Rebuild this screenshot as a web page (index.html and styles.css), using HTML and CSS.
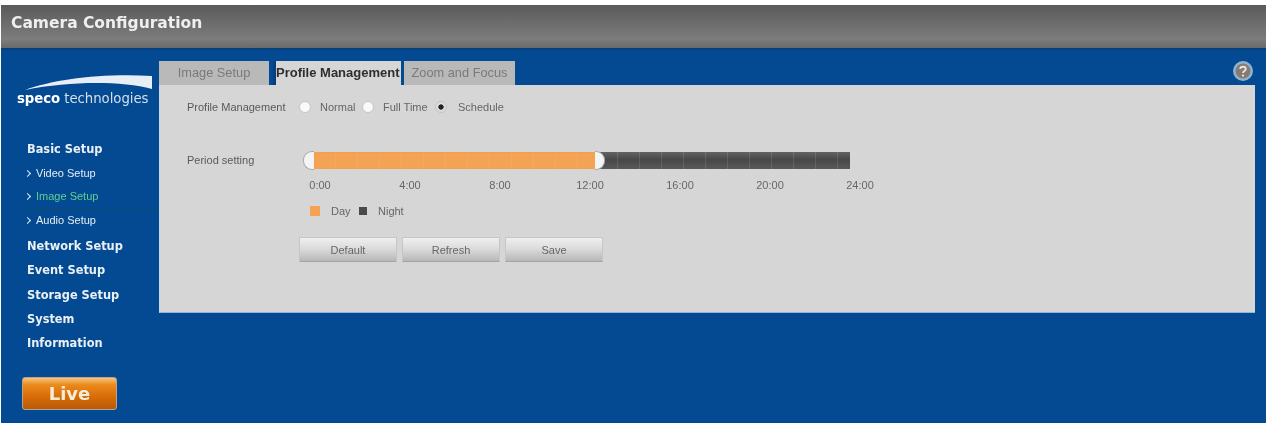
FILE: index.html
```html
<!DOCTYPE html>
<html lang="en">
<head>
<meta charset="utf-8">
<title>Camera Configuration</title>
<link rel="stylesheet" href="styles.css">
</head>
<body>
<div class="app">
  <header class="header">Camera Configuration</header>
  <div class="body">
    <aside class="sidebar">
      <div class="logo">
        <svg class="swoosh" viewBox="0 0 136 20" width="136" height="20"><path d="M9 16C38 5 88 -1 136 2V15C105 7 55 7 9 16Z" fill="#e8eef5"/></svg>
        <div class="logo-text"><b>speco</b> technologies</div>
      </div>
      <nav class="nav">
        <a class="nav-main">Basic Setup</a>
        <a class="nav-sub"><i class="chev"></i>Video Setup</a>
        <a class="nav-sub nav-current"><i class="chev"></i>Image Setup</a>
        <a class="nav-sub nav-last"><i class="chev"></i>Audio Setup</a>
        <a class="nav-main">Network Setup</a>
        <a class="nav-main">Event Setup</a>
        <a class="nav-main">Storage Setup</a>
        <a class="nav-main">System</a>
        <a class="nav-main">Information</a>
      </nav>
      <button class="live">Live</button>
    </aside>
    <main class="main">
      <div class="tabs">
        <div class="tab tab-first">Image Setup</div>
        <div class="tab tab-active">Profile Management</div>
        <div class="tab tab-last">Zoom and Focus</div>
        <svg class="help" viewBox="0 0 22 22" width="22" height="22">
          <circle cx="11" cy="11" r="10" fill="#8fb3cf"/>
          <circle cx="11" cy="11" r="7.5" fill="#857a74"/>
          <path d="M8.2 9C8.2 6 13.8 6 13.8 9C13.8 11 11 11 11 13" fill="none" stroke="#ece4dc" stroke-width="1.8"/>
          <circle cx="11" cy="15.6" r="1.1" fill="#ece4dc"/>
        </svg>
      </div>
      <section class="panel">
        <div class="row-profile">
          <span class="label">Profile Management</span>
          <i class="radio"></i><span class="opt opt-normal">Normal</span>
          <i class="radio"></i><span class="opt opt-full">Full Time</span>
          <i class="radio radio-on"></i><span class="opt">Schedule</span>
        </div>
        <div class="row-period">
          <span class="label period-label">Period setting</span>
          <div class="period">
            <div class="timeline">
              <i class="handle handle-start"></i>
              <div class="bar-day"></div>
              <i class="handle handle-mid"></i>
              <div class="bar-night"></div>
            </div>
            <div class="ticks">
              <span>0:00</span><span>4:00</span><span>8:00</span><span>12:00</span><span>16:00</span><span>20:00</span><span>24:00</span>
            </div>
            <div class="legend">
              <i class="swatch swatch-day"></i><span class="legend-day">Day</span>
              <i class="swatch swatch-night"></i><span>Night</span>
            </div>
          </div>
        </div>
        <div class="buttons">
          <button class="btn">Default</button>
          <button class="btn">Refresh</button>
          <button class="btn">Save</button>
        </div>
      </section>
    </main>
  </div>
</div>
</body>
</html>
```
FILE: styles.css
```css
* { box-sizing: border-box; }
html, body { margin: 0; height: 100%; background: #fff; overflow: hidden; }
body { font-family: "Liberation Sans", Arial, sans-serif; }
.app {
  width: 1268px; height: 423px; padding: 5px 2px 0 1px;
  display: flex; flex-direction: column; filter: blur(0.6px);
}
.header {
  height: 43px; padding: 8px 0 0 10px; flex: none;
  background: linear-gradient(#5a5a5a, #6e6e6e 45%, #7c7c7c 80%, #686a6c);
  color: #eef0f0; font: bold 15.5px/20px "DejaVu Sans", sans-serif;
}
.body { flex: 1; display: flex; background: #034a92; border-top: 2px solid #04407d; }
.sidebar { width: 158px; flex: none; display: flex; flex-direction: column; }
.logo { height: 73px; padding: 24px 0 0 15px; }
.swoosh { display: block; }
.logo-text { margin: -3px 0 0 1px; color: #d4dfea; font: 13.3px/16px "DejaVu Sans", sans-serif; white-space: nowrap; letter-spacing: -0.06px; }
.logo-text b { color: #fff; }
.nav { padding: 14px 0 0 26px; display: flex; flex-direction: column; }
.nav-main { height: 24.2px; color: #eaf0f5; font: bold 11.4px/24px "DejaVu Sans", sans-serif; white-space: nowrap; }
.nav-sub { height: 23.7px; color: #e6edf3; font: 11px/23px "Liberation Sans", sans-serif; white-space: nowrap; position: relative; left: -2px; display: flex; align-items: center; gap: 6px; }
.nav-current { color: #5fd08f; border-bottom: 1px solid #0a4a6e; }
.nav-last { margin-bottom: 2px; }
.chev { width: 5px; height: 5px; border: solid #e6edf3; border-width: 1px 1px 0 0; transform: rotate(45deg); flex: none; }
.live {
  width: 95px; height: 33px; margin: 22px 0 0 21px; padding: 0; border: 1px solid #b9a48e; border-radius: 3px;
  background: linear-gradient(#f6c47c, #ea8a1c 22%, #d86c08 60%, #b85a08);
  color: #f7ecd8; font: bold 18px/30px "DejaVu Sans", sans-serif;
}
.main { flex: 1; padding-top: 11px; }
.tabs { height: 24px; display: flex; position: relative; }
.tab { height: 24px; color: #7a7a7a; font-size: 12.8px; line-height: 23px; text-align: center; background: #b9b9b9; white-space: nowrap; }
.tab-first { width: 110px; }
.tab-active { width: 128px; margin-left: 4px; background: #d6d6d6; color: #2e2e2e; font-weight: bold; font-size: 13px; border-left: 3px solid #04407d; text-align: left; overflow: hidden; }
.tab-last { width: 111px; margin-left: 3px; }
.help { position: absolute; right: 12px; top: -1px; }
.panel {
  width: 1096px; height: 228px; padding-top: 14px; background: #d6d6d6;
  border-bottom: 1px solid #8fb6dc; border-left: 1px solid #c9d8e6;
  display: flex; flex-direction: column;
}
.label { color: #5a5a5a; font-size: 11px; line-height: 14px; white-space: nowrap; }
.row-profile { height: 16px; display: flex; align-items: center; padding-left: 27px; }
.row-profile .label { width: 112px; }
.opt { color: #666; font-size: 11px; white-space: nowrap; }
.opt-normal { width: 42px; }
.opt-full { width: 52px; }
.radio { width: 12px; height: 12px; flex: none; margin-right: 9px; border-radius: 50%; background: #fafafa; border: 1px solid #c4c4c4; }
.radio-on { background: radial-gradient(circle, #222 0 2.3px, #dcdcdc 3px); margin-right: 11px; }
.row-period { display: flex; margin-top: 37px; padding-left: 27px; }
.period-label { width: 116px; padding-top: 1px; }
.period { flex: none; }
.timeline { height: 17px; width: 547px; display: flex; align-items: stretch; position: relative; }
.bar-day { width: 282px; margin-left: 11px; background: repeating-linear-gradient(90deg, #f4a253 0 21px, #f5a85e 21px 22px); box-shadow: inset 0 0 1px #d88a3c; }
.bar-night {
  flex: 1;
  background: linear-gradient(rgba(255,255,255,.1), rgba(0,0,0,.1) 45%, rgba(255,255,255,.05)), repeating-linear-gradient(90deg, #505050 0 21px, #656565 21px 22px);
}
.handle { position: absolute; top: -1px; height: 19px; background: #f2f4f6; border: 1px solid #a8a8a8; z-index: 1; }
.handle-start { left: 0; width: 11px; border-radius: 9px 0 0 9px; border-right: 0; }
.handle-mid { left: 292px; width: 10px; border-radius: 0 9px 9px 0; border-left: 0; }
.ticks { display: grid; grid-template-columns: repeat(7, 90px); margin: 9px 0 0 -28px; color: #666; font-size: 11px; line-height: 14px; text-align: center; width: 630px; }
.legend { display: flex; align-items: center; height: 16px; margin: 11px 0 0 -4px; color: #666; font-size: 11px; padding-left: 11px; }
.swatch { margin-right: 11px; }
.swatch-day { background: #f4a253; width: 10px; height: 10px; }
.swatch-night { background: #4a4a4a; width: 8px; height: 8px; }
.legend-day { width: 28px; }
.buttons { display: flex; gap: 5px; margin-top: 18px; padding-left: 139px; }
.btn {
  width: 98px; height: 25px; padding: 0; border: 1px solid #c6c6c6; border-bottom-color: #a4a4a4; border-radius: 1px;
  background: linear-gradient(#efefef, #dcdcdc 45%, #b8b8b8);
  color: #666; font: 11px "Liberation Sans", sans-serif;
}
```
